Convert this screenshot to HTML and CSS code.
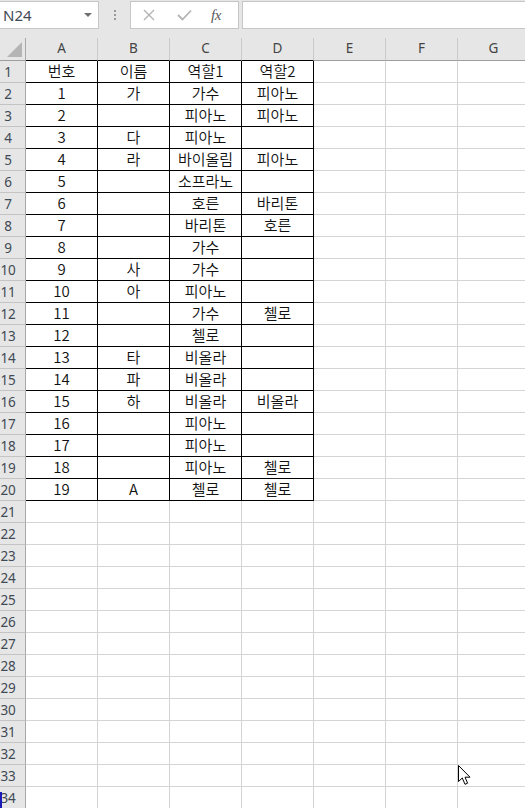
FILE: index.html
```html
<!DOCTYPE html>
<html lang="ko">
<head>
<meta charset="utf-8">
<title>Sheet</title>
<link rel="stylesheet" href="styles.css">
</head>
<body>
<div class="toolbar">
  <div class="namebox"><span>N24</span><span class="caret"></span></div>
  <div class="grip"><i></i><i></i><i></i></div>
  <div class="fbtns">
    <svg class="ico" width="12" height="12" viewBox="0 0 12 12"><path d="M1 1L11 11M11 1L1 11" stroke="#b4b4b4" stroke-width="1.4" fill="none"/></svg>
    <svg class="ico" width="15" height="12" viewBox="0 0 15 12"><path d="M1 6L5.5 10.5L14 1.5" stroke="#b4b4b4" stroke-width="1.8" fill="none"/></svg>
    <span class="fx">fx</span>
  </div>
  <div class="finput"></div>
</div>
<div class="sheet">
  <div class="row hdr">
    <div class="corner"><svg width="15" height="15" viewBox="0 0 15 15"><path d="M15 0L15 15L0 15Z" fill="#b4b4b4"/></svg></div>
    <div class="ch b">A</div><div class="ch b">B</div><div class="ch b">C</div><div class="ch b">D</div><div class="ch">E</div><div class="ch">F</div><div class="ch">G</div>
  </div>
  <div class="row"><div class="rh">1</div><div class="c b">번호</div><div class="c b">이름</div><div class="c b">역할1</div><div class="c b">역할2</div><div class="c"></div><div class="c"></div><div class="c"></div></div>
  <div class="row"><div class="rh">2</div><div class="c b">1</div><div class="c b">가</div><div class="c b">가수</div><div class="c b">피아노</div><div class="c"></div><div class="c"></div><div class="c"></div></div>
  <div class="row"><div class="rh">3</div><div class="c b">2</div><div class="c b"></div><div class="c b">피아노</div><div class="c b">피아노</div><div class="c"></div><div class="c"></div><div class="c"></div></div>
  <div class="row"><div class="rh">4</div><div class="c b">3</div><div class="c b">다</div><div class="c b">피아노</div><div class="c b"></div><div class="c"></div><div class="c"></div><div class="c"></div></div>
  <div class="row"><div class="rh">5</div><div class="c b">4</div><div class="c b">라</div><div class="c b">바이올림</div><div class="c b">피아노</div><div class="c"></div><div class="c"></div><div class="c"></div></div>
  <div class="row"><div class="rh">6</div><div class="c b">5</div><div class="c b"></div><div class="c b">소프라노</div><div class="c b"></div><div class="c"></div><div class="c"></div><div class="c"></div></div>
  <div class="row"><div class="rh">7</div><div class="c b">6</div><div class="c b"></div><div class="c b">호른</div><div class="c b">바리톤</div><div class="c"></div><div class="c"></div><div class="c"></div></div>
  <div class="row"><div class="rh">8</div><div class="c b">7</div><div class="c b"></div><div class="c b">바리톤</div><div class="c b">호른</div><div class="c"></div><div class="c"></div><div class="c"></div></div>
  <div class="row"><div class="rh">9</div><div class="c b">8</div><div class="c b"></div><div class="c b">가수</div><div class="c b"></div><div class="c"></div><div class="c"></div><div class="c"></div></div>
  <div class="row"><div class="rh">10</div><div class="c b">9</div><div class="c b">사</div><div class="c b">가수</div><div class="c b"></div><div class="c"></div><div class="c"></div><div class="c"></div></div>
  <div class="row"><div class="rh">11</div><div class="c b">10</div><div class="c b">아</div><div class="c b">피아노</div><div class="c b"></div><div class="c"></div><div class="c"></div><div class="c"></div></div>
  <div class="row"><div class="rh">12</div><div class="c b">11</div><div class="c b"></div><div class="c b">가수</div><div class="c b">첼로</div><div class="c"></div><div class="c"></div><div class="c"></div></div>
  <div class="row"><div class="rh">13</div><div class="c b">12</div><div class="c b"></div><div class="c b">첼로</div><div class="c b"></div><div class="c"></div><div class="c"></div><div class="c"></div></div>
  <div class="row"><div class="rh">14</div><div class="c b">13</div><div class="c b">타</div><div class="c b">비올라</div><div class="c b"></div><div class="c"></div><div class="c"></div><div class="c"></div></div>
  <div class="row"><div class="rh">15</div><div class="c b">14</div><div class="c b">파</div><div class="c b">비올라</div><div class="c b"></div><div class="c"></div><div class="c"></div><div class="c"></div></div>
  <div class="row"><div class="rh">16</div><div class="c b">15</div><div class="c b">하</div><div class="c b">비올라</div><div class="c b">비올라</div><div class="c"></div><div class="c"></div><div class="c"></div></div>
  <div class="row"><div class="rh">17</div><div class="c b">16</div><div class="c b"></div><div class="c b">피아노</div><div class="c b"></div><div class="c"></div><div class="c"></div><div class="c"></div></div>
  <div class="row"><div class="rh">18</div><div class="c b">17</div><div class="c b"></div><div class="c b">피아노</div><div class="c b"></div><div class="c"></div><div class="c"></div><div class="c"></div></div>
  <div class="row"><div class="rh">19</div><div class="c b">18</div><div class="c b"></div><div class="c b">피아노</div><div class="c b">첼로</div><div class="c"></div><div class="c"></div><div class="c"></div></div>
  <div class="row"><div class="rh">20</div><div class="c b">19</div><div class="c b">A</div><div class="c b">첼로</div><div class="c b">첼로</div><div class="c"></div><div class="c"></div><div class="c"></div></div>
  <div class="row"><div class="rh">21</div><div class="c"></div><div class="c"></div><div class="c"></div><div class="c"></div><div class="c"></div><div class="c"></div><div class="c"></div></div>
  <div class="row"><div class="rh">22</div><div class="c"></div><div class="c"></div><div class="c"></div><div class="c"></div><div class="c"></div><div class="c"></div><div class="c"></div></div>
  <div class="row"><div class="rh">23</div><div class="c"></div><div class="c"></div><div class="c"></div><div class="c"></div><div class="c"></div><div class="c"></div><div class="c"></div></div>
  <div class="row"><div class="rh">24</div><div class="c"></div><div class="c"></div><div class="c"></div><div class="c"></div><div class="c"></div><div class="c"></div><div class="c"></div></div>
  <div class="row"><div class="rh">25</div><div class="c"></div><div class="c"></div><div class="c"></div><div class="c"></div><div class="c"></div><div class="c"></div><div class="c"></div></div>
  <div class="row"><div class="rh">26</div><div class="c"></div><div class="c"></div><div class="c"></div><div class="c"></div><div class="c"></div><div class="c"></div><div class="c"></div></div>
  <div class="row"><div class="rh">27</div><div class="c"></div><div class="c"></div><div class="c"></div><div class="c"></div><div class="c"></div><div class="c"></div><div class="c"></div></div>
  <div class="row"><div class="rh">28</div><div class="c"></div><div class="c"></div><div class="c"></div><div class="c"></div><div class="c"></div><div class="c"></div><div class="c"></div></div>
  <div class="row"><div class="rh">29</div><div class="c"></div><div class="c"></div><div class="c"></div><div class="c"></div><div class="c"></div><div class="c"></div><div class="c"></div></div>
  <div class="row"><div class="rh">30</div><div class="c"></div><div class="c"></div><div class="c"></div><div class="c"></div><div class="c"></div><div class="c"></div><div class="c"></div></div>
  <div class="row"><div class="rh">31</div><div class="c"></div><div class="c"></div><div class="c"></div><div class="c"></div><div class="c"></div><div class="c"></div><div class="c"></div></div>
  <div class="row"><div class="rh">32</div><div class="c"></div><div class="c"></div><div class="c"></div><div class="c"></div><div class="c"></div><div class="c"></div><div class="c"></div></div>
  <div class="row"><div class="rh">33</div><div class="c"></div><div class="c"></div><div class="c"></div><div class="c"></div><div class="c"></div><div class="c"></div><div class="c"></div></div>
  <div class="row"><div class="rh sel">34</div><div class="c"></div><div class="c"></div><div class="c"></div><div class="c"></div><div class="c"></div><div class="c"></div><div class="c"></div></div>
</div>
<svg class="cursor" width="14" height="21" viewBox="0 0 14 21"><path d="M0.5 0.5L0.5 16.5L4.3 13L7 19.3L9.6 18.2L7 12.2L12 12.2Z" fill="#fff" stroke="#000" stroke-width="1" stroke-linejoin="miter"/></svg>
</body>
</html>
```
FILE: styles.css
```css
html, body {
  margin: 0;
  padding: 0;
}
body {
  width: 525px;
  height: 808px;
  overflow: hidden;
  background: #fff;
  position: relative;
  font-family: "Noto Sans CJK KR", "Noto Sans", sans-serif;
}
.toolbar {
  display: flex;
  align-items: flex-start;
  height: 38px;
  box-sizing: border-box;
  padding-top: 1px;
  background: #e6e6e6;
}
.namebox {
  width: 99px;
  height: 28px;
  flex: none;
  box-sizing: border-box;
  background: #fff;
  border: 1px solid #c6c6c6;
  border-left: none;
  display: flex;
  align-items: center;
  justify-content: space-between;
  padding: 0 6px 0 3px;
  font-family: "Noto Sans", sans-serif;
  font-size: 15px;
  color: #3f4a55;
}
.caret {
  width: 0;
  height: 0;
  border-left: 4px solid transparent;
  border-right: 4px solid transparent;
  border-top: 4px solid #707070;
}
.grip {
  width: 31px;
  flex: none;
  display: flex;
  flex-direction: column;
  align-items: center;
  gap: 2px;
  padding-top: 9px;
}
.grip i {
  display: block;
  width: 2px;
  height: 2px;
  background: #9a9a9a;
}
.fbtns {
  width: 109px;
  height: 28px;
  flex: none;
  box-sizing: border-box;
  background: #fff;
  border: 1px solid #c6c6c6;
  display: flex;
  align-items: center;
  padding-left: 12px;
}
.fbtns .ico {
  display: block;
}
.fbtns .ico + .ico {
  margin-left: 22px;
}
.fx {
  margin-left: 19px;
  font-family: "Liberation Serif", serif;
  font-style: italic;
  font-size: 15px;
  color: #5a5a5a;
  letter-spacing: -0.5px;
}
.finput {
  flex: 1;
  height: 28px;
  margin-left: 3px;
  box-sizing: border-box;
  background: #fff;
  border: 1px solid #c6c6c6;
  border-right: none;
}
.row {
  display: flex;
  height: 22px;
}
.row.hdr {
  height: 23px;
}
.corner {
  width: 26px;
  flex: none;
  box-sizing: border-box;
  background: #e6e6e6;
  border-right: 1px solid #a8a8a8;
  border-bottom: 1px solid #9e9e9e;
  display: flex;
  align-items: flex-end;
  justify-content: flex-end;
  padding: 0 3px 3px 0;
}
.corner svg {
  display: block;
}
.ch {
  width: 72px;
  flex: none;
  box-sizing: border-box;
  background: #e6e6e6;
  border-right: 1px solid #cacaca;
  border-bottom: 1px solid #9e9e9e;
  text-align: center;
  font-family: "Noto Sans", sans-serif;
  font-size: 13.5px;
  line-height: 20px;
  color: #444;
}
.ch.b {
  border-bottom-color: #000;
}
.rh {
  width: 26px;
  flex: none;
  box-sizing: border-box;
  background: #e6e6e6;
  border-right: 1px solid #a8a8a8;
  border-bottom: 1px solid #c4c4c4;
  padding-right: 9px;
  text-align: center;
  font-family: "Noto Sans", sans-serif;
  font-size: 13.5px;
  line-height: 22px;
  color: #3f4a55;
  letter-spacing: -0.3px;
  position: relative;
}
.rh.sel::before {
  content: "";
  position: absolute;
  left: 0;
  top: 5px;
  bottom: -1px;
  width: 2px;
  background: #1a1ab8;
}
.c {
  width: 72px;
  flex: none;
  box-sizing: border-box;
  border-right: 1px solid #d4d4d4;
  border-bottom: 1px solid #d4d4d4;
  text-align: center;
  font-size: 15px;
  font-weight: 350;
  line-height: 19px;
  color: #111;
  white-space: nowrap;
  overflow: hidden;
}
.c.b {
  border-right-color: #000;
  border-bottom-color: #000;
}
.cursor {
  position: absolute;
  left: 458px;
  top: 765px;
}
```
